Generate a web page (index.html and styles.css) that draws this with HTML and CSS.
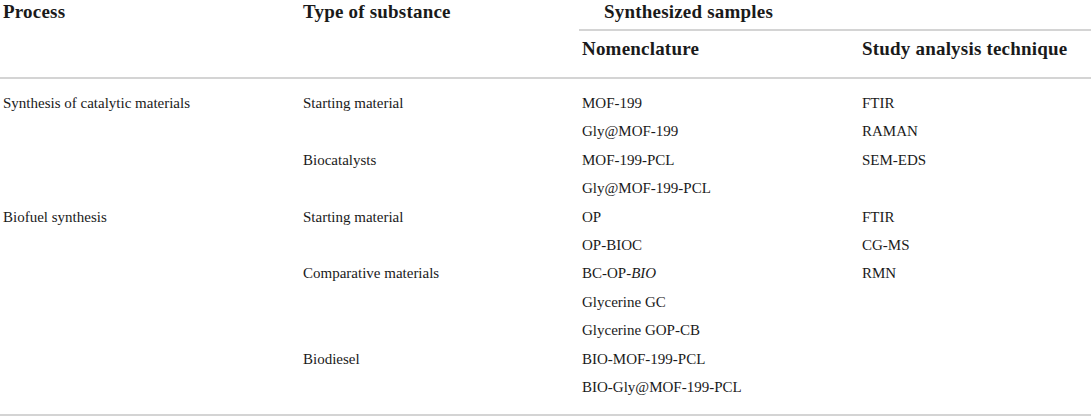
FILE: index.html
```html
<!DOCTYPE html>
<html lang="en">
  <head>
    <meta charset="UTF-8" />
    <meta name="viewport" content="width=device-width, initial-scale=1.0" />
    <title>Synthesized samples table</title>
    <link rel="stylesheet" href="styles.css">
  </head>
  <body>
    <table class="samples">
      <colgroup>
        <col class="colProcess" />
        <col class="colType" />
        <col class="colName" />
        <col class="colTech" />
      </colgroup>
      <thead>
        <tr class="headTop">
          <th rowspan="2">Process</th>
          <th rowspan="2">Type of substance</th>
          <th colspan="2" class="group">Synthesized samples</th>
        </tr>
        <tr class="headSub">
          <th>Nomenclature</th>
          <th>Study analysis technique</th>
        </tr>
      </thead>
      <tbody>
        <tr class="first">
          <td rowspan="4">Synthesis of catalytic materials</td>
          <td rowspan="2">Starting material</td>
          <td>MOF-199</td>
          <td>FTIR</td>
        </tr>
        <tr>
          <td>Gly@MOF-199</td>
          <td>RAMAN</td>
        </tr>
        <tr>
          <td rowspan="2">Biocatalysts</td>
          <td>MOF-199-PCL</td>
          <td>SEM-EDS</td>
        </tr>
        <tr>
          <td>Gly@MOF-199-PCL</td>
          <td></td>
        </tr>
        <tr>
          <td rowspan="7">Biofuel synthesis</td>
          <td rowspan="2">Starting material</td>
          <td>OP</td>
          <td>FTIR</td>
        </tr>
        <tr>
          <td>OP-BIOC</td>
          <td>CG-MS</td>
        </tr>
        <tr>
          <td rowspan="3">Comparative materials</td>
          <td>BC-OP-<i>BIO</i></td>
          <td>RMN</td>
        </tr>
        <tr>
          <td>Glycerine GC</td>
          <td></td>
        </tr>
        <tr>
          <td>Glycerine GOP-CB</td>
          <td></td>
        </tr>
        <tr>
          <td rowspan="2">Biodiesel</td>
          <td>BIO-MOF-199-PCL</td>
          <td></td>
        </tr>
        <tr class="last">
          <td>BIO-Gly@MOF-199-PCL</td>
          <td></td>
        </tr>
      </tbody>
    </table>
  </body>
</html>
```

FILE: styles.css
```css
body {
  margin: 0;
  background: #ffffff;
  color: #1a1a1a;
  font-family: "Liberation Serif", "Times New Roman", serif;
}
.samples {
  width: 100%;
  border-collapse: collapse;
  table-layout: fixed;
}
.colProcess {
  width: 300px;
}
.colType {
  width: 279px;
}
.colName {
  width: 280px;
}
.colTech {
  width: 232px;
}
th,
td {
  text-align: left;
  vertical-align: top;
  padding: 0 0 0 3px;
  white-space: nowrap;
}
th {
  font-size: 19px;
  line-height: 22px;
  font-weight: bold;
  letter-spacing: 0.2px;
}
.headTop th {
  padding-top: 1px;
}
.headTop .group {
  padding: 1px 0 6px 25px;
  border-bottom: 2px solid #d4d4d4;
}
.headSub th {
  padding-top: 7px;
  padding-bottom: 17px;
}
thead {
  border-bottom: 2px solid #d4d4d4;
}
td {
  font-size: 15px;
  line-height: 28.4px;
}
.first td {
  padding-top: 10px;
}
tbody {
  border-bottom: 2px solid #d4d4d4;
}
.last td {
  padding-bottom: 13px;
}
```
